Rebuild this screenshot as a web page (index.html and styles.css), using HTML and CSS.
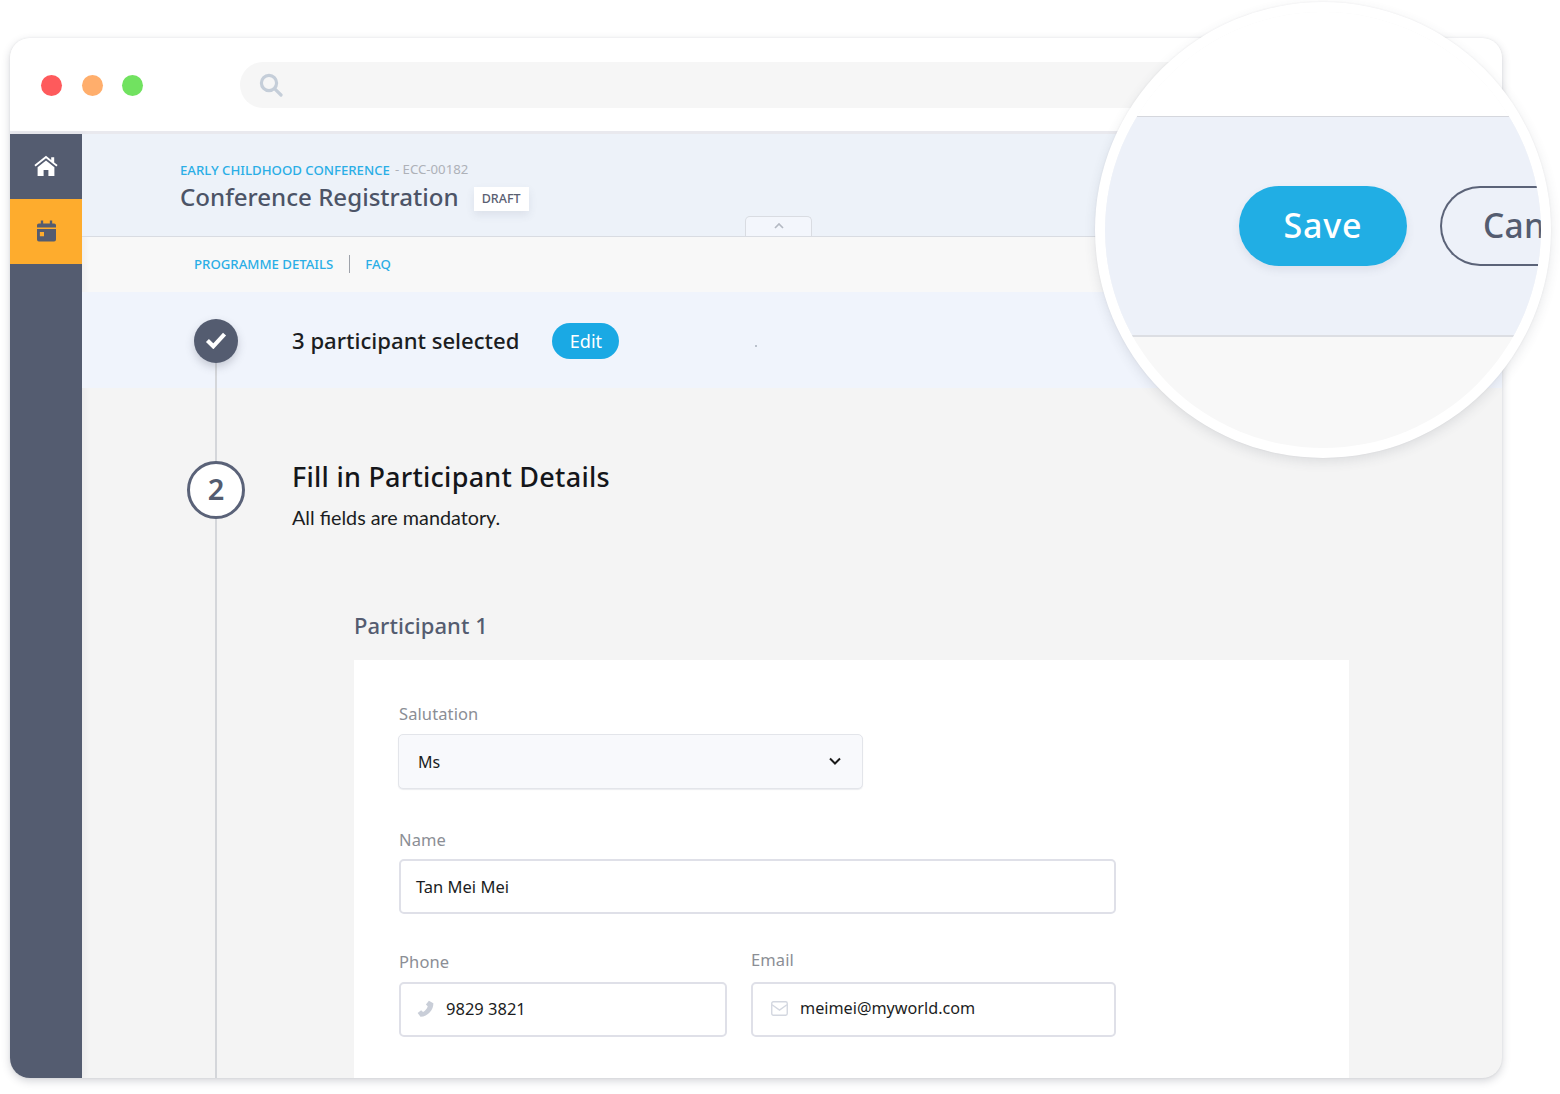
FILE: index.html
```html
<!DOCTYPE html>
<html lang="en">
<head>
<meta charset="utf-8">
<title>Conference Registration</title>
<link rel="stylesheet" href="styles.css">
</head>
<body>
<div class="window">
  <header class="titlebar">
    <div class="lights">
      <span class="light red"></span>
      <span class="light orange"></span>
      <span class="light green"></span>
    </div>
    <div class="search">
      <svg class="search-icon" viewBox="0 0 24 24" fill="none" stroke="#c5ced9" stroke-width="3.2" stroke-linecap="round"><circle cx="10" cy="10" r="7.6"/><path d="M15.8 15.8 22 22"/></svg>
    </div>
  </header>
  <div class="app">
    <nav class="sidebar">
      <div class="side-item">
        <svg class="side-icon" viewBox="0 0 24 22" fill="#fff"><path d="M12 3.2 1.6 11.6l-1.2-1.5L12 .8l5.2 4.2V2.2h3V7.4l3.4 2.7-1.2 1.5z"/><path d="M12 5.4 3.6 12.2V21h6v-6h4.8v6h6v-8.8z"/></svg>
      </div>
      <div class="side-item active">
        <svg class="side-icon cal" viewBox="0 0 20 22" fill="#545c70"><path d="M4 0h2.5v3h7V0H16v3h2a2 2 0 0 1 2 2v2.4H0V5a2 2 0 0 1 2-2h2z"/><path fill-rule="evenodd" d="M0 9h20v11a2 2 0 0 1-2 2H2a2 2 0 0 1-2-2zm3 3v4.400h4.400V12z"/></svg>
      </div>
    </nav>
    <main class="main">
      <section class="page-head">
        <div class="crumb"><span class="crumb-link">EARLY CHILDHOOD CONFERENCE</span><span class="crumb-code">- ECC-00182</span></div>
        <div class="head-row">
          <h1 class="page-title">Conference Registration</h1>
          <span class="badge">DRAFT</span>
        </div>
        <div class="collapse-tab">
          <svg viewBox="0 0 10 6" fill="none" stroke="#b4b9c3" stroke-width="1.700"><path d="m1 5 4-4 4 4"/></svg>
        </div>
      </section>
      <div class="subnav">
        <a class="sub-link">PROGRAMME DETAILS</a>
        <span class="sub-sep"></span>
        <a class="sub-link">FAQ</a>
      </div>
      <div class="steps">
        <section class="step-done">
          <div class="done-dot">
            <svg viewBox="0 0 24 20" fill="none" stroke="#fff" stroke-width="4.600"><path d="M2.500 10.500 9 17 21.500 3.500"/></svg>
          </div>
          <span class="done-text">3 participant selected</span>
          <button class="edit-btn">Edit</button>
          <span class="speck"></span>
        </section>
        <section class="step-current">
          <div class="step-num">2</div>
          <div class="step-copy">
            <h2 class="step-title">Fill in Participant Details</h2>
            <p class="step-sub">All fields are mandatory.</p>
          </div>
        </section>
        <section class="participant">
          <h3 class="participant-title">Participant 1</h3>
          <div class="card">
            <div class="field">
              <label class="label">Salutation</label>
              <div class="select">
                <span>Ms</span>
                <svg class="chev" viewBox="0 0 12 8" fill="none" stroke="#1a1a1a" stroke-width="2"><path d="m1 1.500 5 5 5-5"/></svg>
              </div>
            </div>
            <div class="field name-field">
              <label class="label">Name</label>
              <div class="input">Tan Mei Mei</div>
            </div>
            <div class="field-row">
              <div class="field phone-field">
                <label class="label phone-label">Phone</label>
                <div class="input input-tight">
                  <svg class="in-icon" viewBox="0 0 16 16" fill="#c9ced8"><path d="M11.200.6 15.400 3c.3 5.800-5 12.500-12.100 12.800L.6 12.200l3.300-2.600 1.800 1.600c2-.8 3.900-3.200 4.400-5.300L8.400 4.300z"/></svg>
                  <span>9829 3821</span>
                </div>
              </div>
              <div class="field email-field">
                <label class="label email-label">Email</label>
                <div class="input input-tight">
                  <svg class="in-icon mail" viewBox="0 0 16 14" fill="none" stroke="#d3d7e0" stroke-width="1.300"><rect x=".7" y=".7" width="14.600" height="12.600" rx="1.500"/><path d="m1 3.500 7 5 7-5"/></svg>
                  <span class="email-value">meimei@myworld.com</span>
                </div>
              </div>
            </div>
          </div>
        </section>
      </div>
    </main>
  </div>
</div>
<aside class="lens">
  <div class="lens-inner">
    <div class="lens-top"></div>
    <div class="lens-band">
      <div class="lens-actions">
        <button class="lens-save">Save</button>
        <button class="lens-cancel">Cancel</button>
      </div>
    </div>
    <div class="lens-bottom"></div>
  </div>
</aside>
</body>
</html>
```

FILE: styles.css
```css
* { box-sizing: border-box; }
html, body { margin: 0; height: 100%; }
body {
  position: relative;
  width: 1560px;
  height: 1094px;
  padding: 38px 0 0 10px;
  background: #fff;
  overflow: hidden;
  font-family: "Noto Sans", "Open Sans", sans-serif;
  color: #1b1d22;
}
h1, h2, h3, p { margin: 0; font-weight: 400; }

.window {
  width: 1492px;
  height: 1040px;
  border-radius: 20px;
  overflow: hidden;
  background: #f4f4f4;
  box-shadow: 0 3px 9px rgba(60, 64, 80, .22), 0 0 2px rgba(60, 64, 80, .1);
  display: flex;
  flex-direction: column;
}
.titlebar {
  height: 96px;
  flex: none;
  background: #fff;
  display: flex;
  align-items: center;
  padding: 1px 0 0 31px;
  border-bottom: 3px solid #e9e9ee;
}
.lights { display: flex; gap: 19.500px; }
.light { width: 21px; height: 21px; border-radius: 50%; }
.red { background: #fe5a5c; }
.orange { background: #ffae6c; }
.green { background: #71e260; }
.search {
  margin-left: 97px;
  width: 1000px;
  height: 46px;
  border-radius: 23px;
  background: #f6f6f6;
  display: flex;
  align-items: center;
  padding-left: 19px;
}
.search-icon { width: 24px; height: 24px; }

.app { flex: 1; display: flex; min-height: 0; }
.sidebar {
  position: relative;
  width: 72px;
  flex: none;
  background: #545c70;
  box-shadow: 3px 0 6px rgba(60, 64, 80, .05);
}
.side-item { height: 65px; display: flex; align-items: center; justify-content: center; }
.side-item.active { background: #feac2d; }
.side-icon { width: 24px; height: 22px; margin-top: -1px; }
.side-icon.cal { width: 19px; height: 22px; margin-top: -2px; }

.main { flex: 1; display: flex; flex-direction: column; min-width: 0; }
.page-head {
  position: relative;
  height: 103px;
  flex: none;
  background: #edf2f9;
  border-bottom: 1px solid #d9dce2;
  padding: 28px 0 0 98px;
}
.crumb { display: flex; align-items: baseline; height: 17px; line-height: 17px; }
.crumb-link { font-size: 13.200px; font-weight: 500; color: #2aaee6; }
.crumb-code { font-size: 13.200px; color: #aeb1b8; margin-left: 5px; position: relative; top: -1px; }
.head-row { display: flex; align-items: center; margin-top: 1px; }
.page-title { font-size: 24.100px; line-height: 34px; font-weight: 500; color: #4c5467; }
.badge {
  margin: 4px 0 0 15px;
  width: 55px;
  height: 24px;
  background: #fff;
  font-size: 12.500px;
  font-weight: 500;
  line-height: 24px;
  text-align: center;
  color: #5a6072;
  box-shadow: 0 4px 8px rgba(70, 80, 110, .1);
}
.collapse-tab {
  position: absolute;
  left: 663px;
  bottom: 0;
  width: 67px;
  height: 20px;
  background: #f3f6fc;
  border: 1px solid #d9dce2;
  border-bottom: 0;
  border-radius: 5px 5px 0 0;
  display: flex;
  justify-content: center;
  padding-top: 6px;
}
.collapse-tab svg { width: 10px; height: 6px; }

.subnav {
  height: 55px;
  flex: none;
  background: #f8f8f8;
  display: flex;
  align-items: center;
  padding: 0 0 2px 112px;
}
.sub-link { font-size: 13.200px; font-weight: 500; color: #2aaee6; }
.sub-sep { width: 1px; height: 18px; background: #9ea2aa; margin: 0 15px 0 16px; }

.steps { position: relative; flex: 1; min-height: 0; }
.steps::before {
  content: "";
  position: absolute;
  z-index: 1;
  left: 133px;
  top: 70px;
  bottom: 0;
  width: 2px;
  background: #d4d6da;
}
.step-done {
  position: relative;
  height: 96px;
  background: #f0f4fc;
  display: flex;
  align-items: center;
  padding: 0 0 0 112px;
}
.done-dot {
  position: relative;
  z-index: 2;
  width: 44px;
  height: 44px;
  margin-top: 2px;
  border-radius: 50%;
  background: #545c70;
  box-shadow: 0 4px 9px rgba(70, 75, 95, .25);
  display: flex;
  align-items: center;
  justify-content: center;
}
.done-dot svg { width: 22px; height: 18px; margin-top: -2px; }
.done-text { margin-left: 54px; font-size: 22.100px; font-weight: 500; color: #1b1d22; }
.edit-btn {
  margin: 1px 0 0 33px;
  width: 67px;
  height: 36px;
  border: 0;
  border-radius: 18px;
  background: #1aa9e4;
  color: #fff;
  font: 400 18px "Noto Sans", sans-serif;
}
.speck { position: absolute; left: 673px; top: 53px; width: 2px; height: 2px; background: #a9b0bc; border-radius: 50%; }

.step-current { position: relative; z-index: 2; display: flex; padding: 73px 0 0 105px; }
.step-num {
  flex: none;
  width: 58px;
  height: 58px;
  border-radius: 50%;
  background: #fff;
  border: 3px solid #5a6278;
  color: #545c70;
  font-size: 29px;
  font-weight: 600;
  line-height: 50px;
  text-align: center;
}
.step-copy { margin-left: 47px; margin-top: -3px; }
.step-title { font-size: 27px; letter-spacing: .25px; line-height: 37px; font-weight: 500; color: #14161a; }
.step-sub { font-size: 19.750px; line-height: 26px; margin-top: 10px; color: #1b1d22; font-family: "Lato", "Noto Sans", sans-serif; }

.participant { position: relative; padding: 79px 0 0 272px; }
.participant-title { font-size: 22px; letter-spacing: .05px; line-height: 30px; font-weight: 500; color: #545c70; }
.card {
  margin-top: 20px;
  width: 995px;
  height: 500px;
  background: #fff;
  padding: 43px 0 0 44px;
}
.field { display: flex; flex-direction: column; }
.label { font-size: 16.500px; letter-spacing: .1px; line-height: 22px; color: #8b8e95; margin-left: 1px; }
.select {
  margin-top: 9px;
  width: 465px;
  height: 55px;
  border: 1px solid #e3e5ea;
  border-radius: 5px;
  background: #f8f9fc;
  box-shadow: 0 1px 1px rgba(90, 100, 125, .12);
  display: flex;
  align-items: center;
  justify-content: space-between;
  padding: 0 21px 0 19px;
  font-size: 16px;
  color: #1b1d22;
}
.chev { width: 12px; height: 8px; margin-top: -2px; }
.name-field { margin-top: 40px; margin-left: 1px; }
.name-field .label { margin-left: 0; }
.input {
  height: 55px;
  border: 2px solid #dfe0e8;
  border-radius: 5px;
  background: #fff;
  display: flex;
  align-items: center;
  padding-left: 15px;
  font-size: 16.500px;
  color: #1b1d22;
}
.input-tight { padding-bottom: 2px; }
.name-field .input { margin-top: 8px; width: 717px; }
.field-row { display: flex; margin-top: 35px; margin-left: 1px; gap: 24px; align-items: flex-end; }
.phone-field { width: 328px; }
.phone-field .input { margin-top: 9px; padding-left: 16px; }
.phone-label { margin-left: 0; }
.email-field { width: 365px; }
.email-field .input { margin-top: 11px; padding-left: 18px; }
.email-label { margin-left: 0; }
.email-value { font-size: 16.200px; position: relative; top: -1px; }
.in-icon { width: 17px; height: 17px; margin-right: 12px; flex: none; }
.in-icon.mail { width: 17px; height: 15px; margin-right: 12px; }

.lens {
  position: absolute;
  left: 1095px;
  top: 2px;
  width: 456px;
  height: 456px;
  border-radius: 50%;
  background: #fff;
  padding: 10px;
  box-shadow: 0 4px 12px rgba(60, 64, 80, .12), 0 0 2px rgba(60, 64, 80, .08);
}
.lens-inner {
  width: 100%;
  height: 100%;
  border-radius: 50%;
  overflow: hidden;
  display: flex;
  flex-direction: column;
  background: #f8f8f8;
}
.lens-top { height: 105px; flex: none; background: #fff; border-bottom: 1px solid #d5d7dd; }
.lens-band {
  height: 220px;
  flex: none;
  background: #edf1f9;
  border-bottom: 2px solid #dcdee3;
  padding: 69px 0 0 134px;
}
.lens-actions { display: flex; gap: 33px; }
.lens-save {
  flex: none;
  width: 168px;
  height: 80px;
  border: 0;
  border-radius: 40px;
  background: #21aee4;
  color: #fff;
  font: 500 34px "Noto Sans", sans-serif;
  letter-spacing: .8px;
  padding: 0 0 2px;
  box-shadow: 0 4px 8px rgba(70, 80, 110, .1);
}
.lens-cancel {
  flex: none;
  width: 98px;
  height: 80px;
  border: 2px solid #5b6378;
  border-right: 0;
  border-radius: 40px 0 0 40px;
  background: transparent;
  color: #545c70;
  font: 500 33.500px "Noto Sans", sans-serif;
  letter-spacing: .3px;
  text-align: left;
  white-space: nowrap;
  overflow: visible;
  padding: 0 0 2px 41px;
}
.lens-bottom { flex: 1; }
```
